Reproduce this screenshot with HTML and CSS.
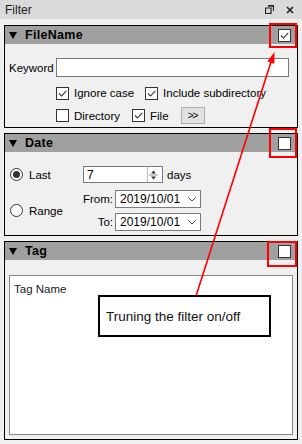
FILE: index.html
```html
<!DOCTYPE html>
<html lang="en">
<head>
    <meta charset="UTF-8">
    <meta name="viewport" content="width=device-width, initial-scale=1.0">
    <title>Filter</title>
    <link rel="stylesheet" href="styles.css">
</head>
<body>
<div class="window">

    <div class="titlebar">
        <span class="title">Filter</span>
        <span class="tb-icons">
            <svg width="9" height="9" viewBox="0 0 9 9"><path d="M3 0.5h5.5v5.5M0.5 3h5.5v5.5h-5.5z" fill="none" stroke="#222" stroke-width="1.2"/><path d="M3 0.5h5.5v1.2h-5.5z" fill="#222"/></svg>
            <svg width="8" height="8" viewBox="0 0 8 8"><path d="M1 1l6 6M7 1l-6 6" stroke="#222" stroke-width="1.6"/></svg>
        </span>
    </div>

    <div class="panels">

        <!-- FileName -->
        <section class="panel">
            <div class="panel-head">
                <svg class="caret" width="8" height="7" viewBox="0 0 8 7"><path d="M0 0h8l-4 7z" fill="#000"/></svg>
                <span class="head-title">FileName</span>
                <span class="chk on head-chk"><svg viewBox="0 0 11 11"><path d="M2 5.5l2.5 2.5 4.8-5.2" fill="none" stroke="#333" stroke-width="1.1"/></svg></span>
            </div>
            <div class="panel-body fn-body">
                <div class="keyword-row">
                    <span class="kw-label">Keyword</span>
                    <span class="textbox kw-box"></span>
                </div>
                <div class="opt-row">
                    <span class="opt opt-ignore"><span class="chk on"><svg viewBox="0 0 11 11"><path d="M2 5.5l2.5 2.5 4.8-5.2" fill="none" stroke="#333" stroke-width="1.1"/></svg></span>Ignore case</span>
                    <span class="opt"><span class="chk on"><svg viewBox="0 0 11 11"><path d="M2 5.5l2.5 2.5 4.8-5.2" fill="none" stroke="#333" stroke-width="1.1"/></svg></span>Include subdirectory</span>
                </div>
                <div class="opt-row opt-row2">
                    <span class="opt opt-dir"><span class="chk"></span>Directory</span>
                    <span class="opt opt-file"><span class="chk on"><svg viewBox="0 0 11 11"><path d="M2 5.5l2.5 2.5 4.8-5.2" fill="none" stroke="#333" stroke-width="1.1"/></svg></span>File</span>
                    <span class="more-btn">&gt;&gt;</span>
                </div>
            </div>
        </section>

        <!-- Date -->
        <section class="panel">
            <div class="panel-head">
                <svg class="caret" width="8" height="7" viewBox="0 0 8 7"><path d="M0 0h8l-4 7z" fill="#000"/></svg>
                <span class="head-title">Date</span>
                <span class="chk head-chk"></span>
            </div>
            <div class="panel-body date-body">
                <div class="last-row">
                    <span class="radio-col"><span class="radio on"></span>Last</span>
                    <span class="textbox spin-box">
                        <span class="spin-val">7</span>
                        <span class="spin">
                            <svg width="11" height="14" viewBox="0 0 11 14"><path d="M3 5.5h5l-2.5-3z M3 8.5h5l-2.5 3z" fill="#333"/><path d="M1 7h9" stroke="#999"/></svg>
                        </span>
                    </span>
                    <span class="days">days</span>
                </div>
                <div class="range-row">
                    <span class="radio-col"><span class="radio"></span>Range</span>
                    <div class="range-fields">
                        <div class="date-line">
                            <span class="date-label">From:</span>
                            <span class="textbox combo">2019/10/01<svg class="chev" width="8" height="5" viewBox="0 0 8 5"><path d="M0.5 0.5l3.5 3.5 3.5-3.5" fill="none" stroke="#444"/></svg></span>
                        </div>
                        <div class="date-line">
                            <span class="date-label">To:</span>
                            <span class="textbox combo">2019/10/01<svg class="chev" width="8" height="5" viewBox="0 0 8 5"><path d="M0.5 0.5l3.5 3.5 3.5-3.5" fill="none" stroke="#444"/></svg></span>
                        </div>
                    </div>
                </div>
            </div>
        </section>

        <!-- Tag -->
        <section class="panel panel-tag">
            <div class="panel-head">
                <svg class="caret" width="8" height="7" viewBox="0 0 8 7"><path d="M0 0h8l-4 7z" fill="#000"/></svg>
                <span class="head-title">Tag</span>
                <span class="chk head-chk"></span>
            </div>
            <div class="panel-body tag-body">
                <div class="tag-list">Tag Name</div>
            </div>
        </section>
    </div>

    <!-- annotation over the panel -->
    <svg class="annot" width="302" height="444" viewBox="0 0 302 444">
        <rect x="270" y="24" width="26" height="23" fill="none" stroke="#f00" stroke-width="2"/>
        <rect x="270" y="129" width="26" height="28" fill="none" stroke="#f00" stroke-width="2"/>
        <rect x="268" y="242" width="28" height="24" fill="none" stroke="#f00" stroke-width="2"/>
        <line x1="196" y1="296" x2="271" y2="62" stroke="#f00" stroke-width="1.6"/>
        <path d="M274.5 52 L274.4 63.8 L267.4 61.5 Z" fill="#f00"/>
    </svg>
    <div class="callout">Truning the filter on/off</div>
</div>
</body>
</html>
```

FILE: styles.css
```css
body {
    margin: 0;
    background-color: #f0f0f0;
    font-family: "Liberation Sans", Arial, sans-serif;
    font-size: 11.5px;
    color: #000;
}

.window {
    position: relative;
    width: 302px;
    height: 444px;
    overflow: hidden;
}

.titlebar {
    height: 19px;
    background-color: #dadada;
    display: flex;
    align-items: center;
    padding-left: 5px;
    font-size: 12px;
    color: #1a1a1a;
}

.tb-icons {
    margin-left: auto;
    margin-right: 8px;
    display: flex;
    align-items: center;
    gap: 12px;
}

.panels {
    height: 425px;
    box-sizing: border-box;
    padding: 6px 4px 4px 4px;
    display: flex;
    flex-direction: column;
    gap: 5px;
}

.panel {
    border: 1px solid #000;
    display: flex;
    flex-direction: column;
}

.panel-head {
    height: 18px;
    background-color: #a0a0a0;
    display: flex;
    align-items: center;
    padding: 0 6px 0 4px;
}

.caret {
    margin-right: 8px;
}

.head-title {
    font-weight: bold;
    font-size: 12.5px;
    letter-spacing: 0.3px;
}

.head-chk {
    margin-left: auto;
}

/* checkbox + radio */
.chk {
    width: 11px;
    height: 11px;
    border: 1px solid #333;
    background-color: #fff;
    display: inline-flex;
    flex: none;
}

.chk svg {
    width: 11px;
    height: 11px;
}

.radio {
    width: 11px;
    height: 11px;
    border: 1px solid #333;
    border-radius: 50%;
    background-color: #fff;
    display: inline-flex;
    align-items: center;
    justify-content: center;
    flex: none;
}

.radio.on::after {
    content: "";
    width: 7px;
    height: 7px;
    border-radius: 50%;
    background-color: #333;
}

.textbox {
    background-color: #fff;
    border: 1px solid #7a7a7a;
    box-sizing: border-box;
}

/* FileName */
.fn-body {
    padding: 14px 4px 3px 4px;
}

.keyword-row {
    display: flex;
    align-items: center;
    height: 19px;
}

.kw-label {
    width: 47px;
}

.kw-box {
    width: 233px;
    height: 19px;
}

.opt-row {
    display: flex;
    align-items: center;
    height: 14px;
    margin-top: 9px;
    padding-left: 47px;
}

.opt-row2 {
    height: 17px;
    margin-top: 7px;
}

.opt {
    display: flex;
    align-items: center;
    gap: 5px;
}

.opt-ignore {
    margin-right: 11px;
}

.opt-dir {
    margin-right: 12px;
}

.opt-file {
    margin-right: 12px;
}

.more-btn {
    width: 22px;
    height: 15px;
    background-color: #e1e1e1;
    border: 1px solid #adadad;
    display: flex;
    align-items: center;
    justify-content: center;
    font-size: 10px;
    letter-spacing: -1px;
}

/* Date */
.date-body {
    padding: 14px 4px 4px 5px;
}

.last-row {
    display: flex;
    align-items: center;
    height: 17px;
}

.radio-col {
    width: 73px;
    display: flex;
    align-items: center;
    gap: 6px;
}

.spin-box {
    width: 80px;
    height: 17px;
    display: flex;
    align-items: center;
    padding-left: 3px;
    font-size: 12px;
}

.spin-val {
    flex: 1;
}

.spin {
    width: 12px;
    height: 15px;
    border-left: 1px solid #bbb;
    margin-right: 2px;
    display: flex;
    align-items: center;
}

.days {
    margin-left: 4px;
}

.range-row {
    display: flex;
    align-items: center;
    margin-top: 7px;
}

.range-fields {
    display: flex;
    flex-direction: column;
    gap: 5px;
}

.date-line {
    display: flex;
    align-items: center;
}

.date-label {
    width: 30px;
    margin-right: 2px;
    text-align: right;
}

.combo {
    width: 86px;
    height: 18px;
    display: flex;
    align-items: center;
    padding-left: 4px;
    font-size: 12px;
}

.chev {
    margin-left: auto;
    margin-right: 4px;
}

/* Tag */
.panel-tag {
    flex: 1;
}

.tag-body {
    flex: 1;
    display: flex;
    padding: 15px 4px 4px 4px;
}

.tag-list {
    flex: 1;
    background-color: #fff;
    border: 1px solid #828790;
    padding: 7px 4px;
    font-size: 11.5px;
    color: #1a1a2a;
}

/* annotation */
.annot {
    position: absolute;
    left: 0;
    top: 0;
    pointer-events: none;
}

.callout {
    position: absolute;
    left: 98px;
    top: 295px;
    width: 169px;
    height: 38px;
    border: 2px solid #000;
    background-color: #fff;
    display: flex;
    align-items: center;
    padding-left: 6px;
    box-sizing: content-box;
    width: 163px;
    font-size: 13.5px;
    color: #111;
}
```
